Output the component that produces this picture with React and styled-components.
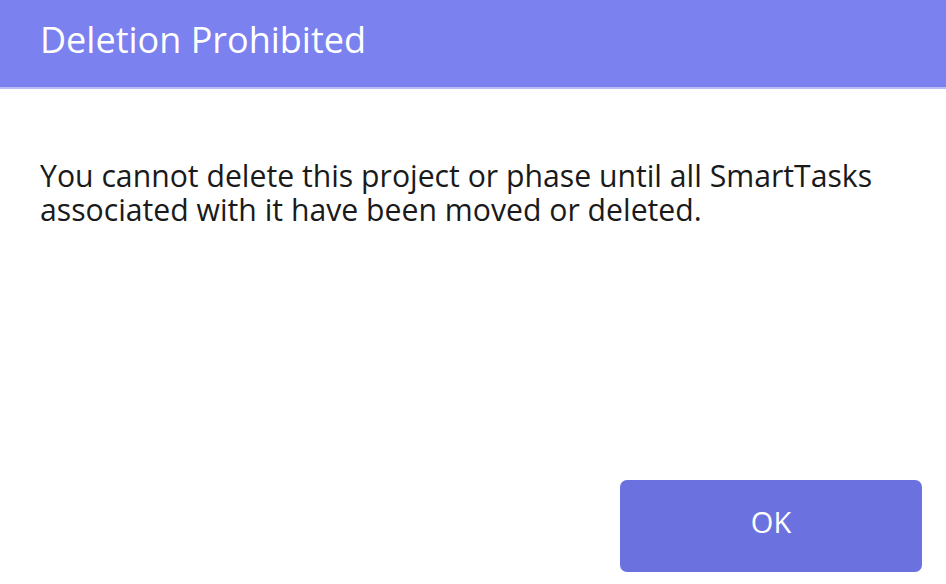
import React from "react";
import styled, { createGlobalStyle } from "styled-components";

const Global = createGlobalStyle`
  html, body { margin: 0; padding: 0; background: #ffffff; }
  body { font-family: "Open Sans", "Noto Sans", sans-serif; }
`;

const Dialog = styled.div`
  width: 946px;
  height: 584px;
  display: flex;
  flex-direction: column;
  background: #ffffff;
  box-sizing: border-box;
`;

const Header = styled.div`
  height: 89px;
  background: #7b81ee;
  border-bottom: 2px solid #b9bdf6;
  display: flex;
  align-items: center;
  padding: 0 40px;
  box-sizing: border-box;
`;

const Title = styled.h1`
  margin: 0 0 8px 0;
  font-size: 36px;
  font-weight: 400;
  color: #ffffff;
  line-height: normal;
`;

const Body = styled.div`
  flex: 1;
  padding: 70px 40px 0 40px;
`;

const Message = styled.p`
  margin: 0;
  font-size: 30.2px;
  line-height: 34px;
  color: #1a1a1a;
`;

const Footer = styled.div`
  display: flex;
  justify-content: flex-end;
  padding: 0 24px 12px 0;
`;

const Button = styled.button`
  width: 302px;
  height: 92px;
  border: none;
  border-radius: 7px;
  background: #6b72e0;
  color: #ffffff;
  font-family: "Open Sans", sans-serif;
  font-size: 29px;
  padding: 0 0 10px 0;
  cursor: pointer;
`;

export default function App() {
  return (
    <>
      <Global />
      <Dialog>
        <Header>
          <Title>Deletion Prohibited</Title>
        </Header>
        <Body>
          <Message>
            You cannot delete this project or phase until all SmartTasks
            <br />
            associated with it have been moved or deleted.
          </Message>
        </Body>
        <Footer>
          <Button>OK</Button>
        </Footer>
      </Dialog>
    </>
  );
}
